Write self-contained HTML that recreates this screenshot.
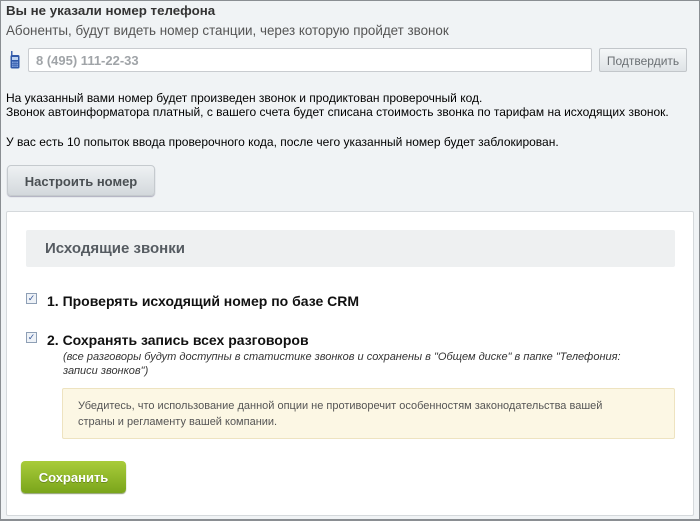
<!DOCTYPE html>
<html><head><meta charset="utf-8"><style>
*{margin:0;padding:0;box-sizing:border-box}
body{width:700px;height:521px;overflow:hidden;background:#f0f3f5;font-family:"Liberation Sans",Arial,sans-serif;font-size:12px;color:#000;position:relative}
.frame{position:absolute;left:0;top:0;width:700px;height:521px;border:1px solid #8a8e92;border-bottom:2px solid #8a8e92}
.abs{position:absolute;white-space:nowrap}
</style></head><body>
<div class="frame"></div>
<div class="abs" style="left:6px;top:3px;font-size:13.3px;font-weight:bold;color:#333">Вы не указали номер телефона</div>
<div class="abs" style="left:6px;top:23px;font-size:13.4px;color:#555">Абоненты, будут видеть номер станции, через которую пройдет звонок</div>
<svg class="abs" style="left:10px;top:51px" width="10" height="18" viewBox="0 0 10 18"><rect x="1" y="0" width="1.5" height="5" fill="#3d64b0"/><rect x="0.5" y="4" width="9" height="13.5" rx="1.5" fill="#3058a8"/><rect x="2" y="6" width="6" height="3" fill="#bcd2f0"/><rect x="2" y="10.5" width="6" height="5.5" fill="#7fa0dc"/><path d="M2 12.3H8M2 14.2H8M4 10.5V16M6 10.5V16" stroke="#3058a8" stroke-width="0.6"/></svg>
<div class="abs" style="left:28px;top:48px;width:564px;height:24px;background:#fff;border:1px solid #c9ccd0;border-radius:2px;padding:4px 0 0 7px;font-size:13px;font-weight:bold;color:#a0a4a8">8 (495) 111-22-33</div>
<div class="abs" style="left:599px;top:48px;width:88px;height:24px;background:linear-gradient(#f5f7f8,#dfe3e6);border:1px solid #c2c6ca;border-radius:2px;text-align:center;padding-top:5px;color:#6a6f73;font-size:12px">Подтвердить</div>
<div class="abs" style="left:6px;top:91px;line-height:14px">На указанный вами номер будет произведен звонок и продиктован проверочный код.<br>Звонок автоинформатора платный, с вашего счета будет списана стоимость звонка по тарифам на исходящих звонок.</div>
<div class="abs" style="left:6px;top:135px">У вас есть 10 попыток ввода проверочного кода, после чего указанный номер будет заблокирован.</div>
<div class="abs" style="left:7px;top:165px;width:148px;height:31px;background:linear-gradient(#eef1f3,#d3d8dc);border:1px solid #c5cace;border-radius:4px;box-shadow:0 1px 1px #aab;text-align:center;padding-top:8px;font-size:13px;font-weight:bold;color:#4a4f53">Настроить номер</div>
<div class="abs" style="left:6px;top:211px;width:688px;height:305px;background:#fff;border:1px solid #d5d9dc;border-radius:2px"></div>
<div class="abs" style="left:26px;top:230px;width:649px;height:37px;background:#eef0f1;border-radius:2px;padding:10px 0 0 19px;font-size:15px;font-weight:bold;color:#555b61">Исходящие звонки</div>
<div class="abs" style="left:26px;top:293px;width:11px;height:11px;border:1px solid #8e9fb5;background:#eef2f7;font-size:9px;line-height:9px;text-align:center;color:#3a5a9a">✓</div>
<div class="abs" style="left:47px;top:293px;font-size:14px;font-weight:bold;color:#111">1. Проверять исходящий номер по базе CRM</div>
<div class="abs" style="left:26px;top:332px;width:11px;height:11px;border:1px solid #8e9fb5;background:#eef2f7;font-size:9px;line-height:9px;text-align:center;color:#3a5a9a">✓</div>
<div class="abs" style="left:47px;top:332px;font-size:14px;font-weight:bold;color:#111">2. Сохранять запись всех разговоров</div>
<div class="abs" style="left:63px;top:350px;font-size:11px;font-style:italic;color:#333;line-height:14px">(все разговоры будут доступны в статистике звонков и сохранены в "Общем диске" в папке "Телефония:<br>записи звонков")</div>
<div class="abs" style="left:62px;top:388px;width:613px;height:51px;background:#fcf7e4;border:1px solid #eee3c0;border-radius:2px;padding:9px 0 0 15px;font-size:11px;color:#555;line-height:16px">Убедитесь, что использование данной опции не противоречит особенностям законодательства вашей<br>страны и регламенту вашей компании.</div>
<div class="abs" style="left:21px;top:461px;width:105px;height:32px;background:linear-gradient(#a9cc3a,#7aa51b);border-radius:4px;box-shadow:0 1px 1px #8a9a6a;text-align:center;padding-top:9px;font-size:13px;font-weight:bold;color:#fff;text-shadow:0 1px 0 #6a8a20">Сохранить</div>
</body></html>
